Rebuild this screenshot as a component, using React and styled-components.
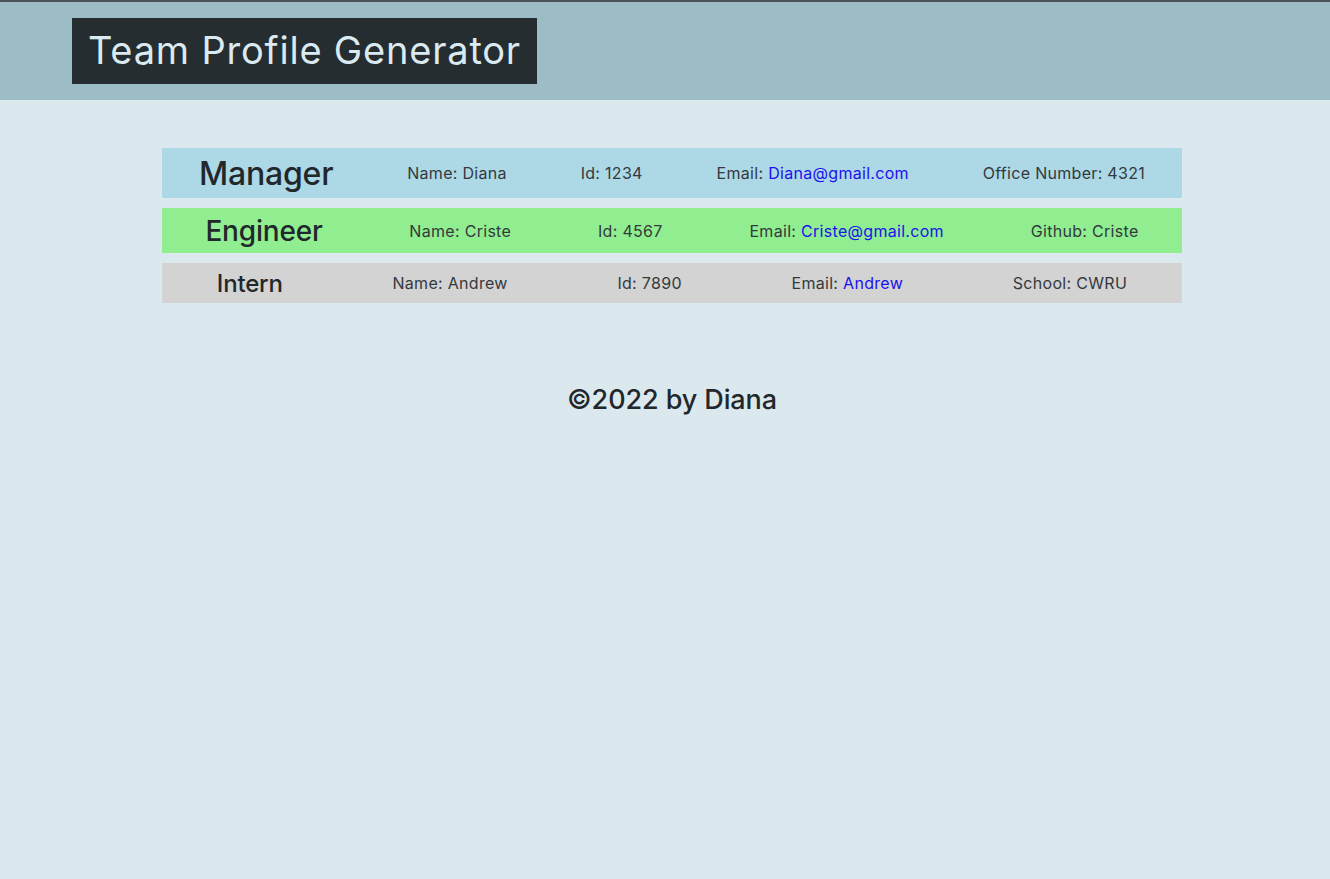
import React from "react";
import styled, { createGlobalStyle } from "styled-components";

const team = [
  {
    role: "Manager",
    size: 32,
    height: 50,
    bg: "#add8e6",
    name: "Diana",
    id: 1234,
    email: "Diana@gmail.com",
    extraLabel: "Office Number",
    extra: "4321",
  },
  {
    role: "Engineer",
    size: 28,
    height: 45,
    bg: "#90ee90",
    name: "Criste",
    id: 4567,
    email: "Criste@gmail.com",
    extraLabel: "Github",
    extra: "Criste",
  },
  {
    role: "Intern",
    size: 24,
    height: 40,
    bg: "#d3d3d3",
    name: "Andrew",
    id: 7890,
    email: "Andrew",
    extraLabel: "School",
    extra: "CWRU",
  },
];

const App = () => {
  return (
    <>
      <GlobalStyle />
      <Header>
        <Title>Team Profile Generator</Title>
      </Header>
      <Content>
        <Main>
          {team.map((member) => (
            <Row key={member.role} $bg={member.bg} $height={member.height}>
              <Role $size={member.size}>{member.role}</Role>
              <Field>Name: {member.name}</Field>
              <Field>Id: {member.id}</Field>
              <Field>
                Email: <MailLink href="#">{member.email}</MailLink>
              </Field>
              <Field>
                {member.extraLabel}: {member.extra}
              </Field>
            </Row>
          ))}
        </Main>
        <Footer>©2022 by Diana</Footer>
      </Content>
    </>
  );
};

export default App;

// Styled-components
const GlobalStyle = createGlobalStyle`
  html, body {
    margin: 0;
    padding: 0;
    background-color: #dbe9ee;
    font-family: Inter, "Noto Sans", "Liberation Sans", sans-serif;
    color: #212529;
  }
`;

const Header = styled.header`
  height: 100px;
  box-sizing: border-box;
  border-top: 2px solid #4a5358;
  background-color: #9dbdc6;
  padding: 16px 0 0 72px;
`;

const Title = styled.h1`
  display: inline-block;
  margin: 0;
  padding: 0 16px;
  height: 66px;
  line-height: 64px;
  background-color: #252d31;
  color: #dbeaf0;
  font-size: 38px;
  font-weight: 400;
  letter-spacing: 0.8px;
`;

const Content = styled.div`
  padding-left: 14px;
`;

const Main = styled.main`
  width: 1020px;
  margin: 48px auto 0;
  display: flex;
  flex-direction: column;
  gap: 10px;
`;

const Row = styled.section`
  display: flex;
  justify-content: space-around;
  align-items: center;
  height: ${(p) => p.$height}px;
  background-color: ${(p) => p.$bg};
`;

const Role = styled.h2`
  margin: 0;
  font-size: ${(p) => p.$size}px;
  font-weight: 500;
  letter-spacing: -0.2px;
  color: #22272b;
`;

const Field = styled.span`
  font-size: 16px;
  color: #33393d;
  letter-spacing: 0.3px;
`;

const MailLink = styled.a`
  color: #2010ee;
  text-decoration: none;
`;

const Footer = styled.footer`
  margin-top: 80px;
  text-align: center;
  font-size: 27px;
  font-weight: 500;
  color: #22272b;
  letter-spacing: -0.1px;
`;
